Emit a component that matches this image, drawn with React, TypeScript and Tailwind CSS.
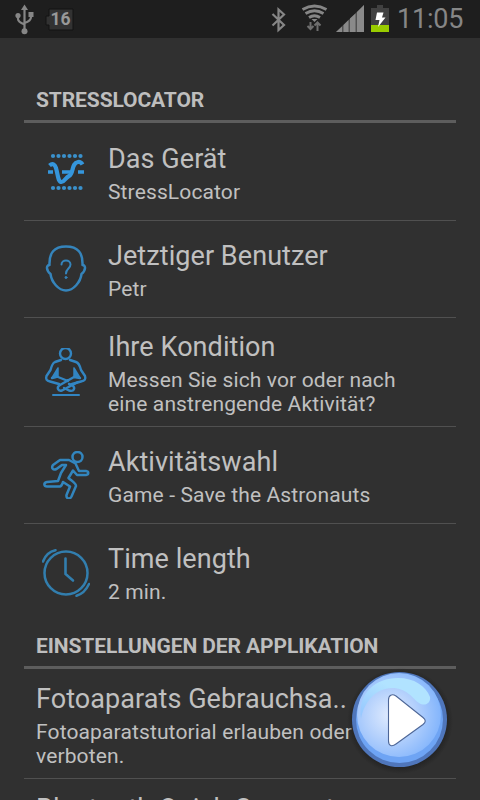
import type { ReactNode } from "react";
import clsx from "clsx";

function DeviceIcon() {
  const dots = [1.5, 7, 12.5, 18, 23.5, 29];
  return (
    <svg width="48" height="48" viewBox="0 0 48 48" fill="none" stroke="#3596dc">
      {dots.map((x) => (
        <g key={x} fill="#3a91cc" stroke="none">
          <circle cx={x + 9.5} cy="8" r="2.1" />
          <circle cx={x + 9.5} cy="40" r="2.1" />
        </g>
      ))}
      <path d="M6 24h5M20 24h9M36 24h6" strokeWidth="3.4" />
      <path d="M7.500 17.500C11 14.500 13 17 14 20C16 27 16 34 19.500 34C22.500 34 23.500 29.500 27 28C32 26 29 15 36 14C38 13.800 39.500 14.800 40.500 16.500" strokeWidth="4.2" />
    </svg>
  );
}

function UserIcon() {
  return (
    <svg width="48" height="48" viewBox="0 0 48 48" fill="none" stroke="#3584bb" strokeWidth="2.5" strokeLinejoin="round" strokeLinecap="round">
      <path d="M24 1.500C12 1.500 7 8 7.500 20C4 20 4 25.500 8.500 29C9.500 37 16.500 45.500 24 45.500C31.500 45.500 38.500 37 39.500 29C44 25.500 44 20 40.500 20C41 8 36 1.500 24 1.500Z" />
      <path d="M19.500 19.500C19.500 14 28.500 14 28.500 19.500C28.500 23.500 24 23.500 24 28.500" strokeWidth="2" />
      <circle cx="24" cy="32.500" r="1" fill="#3584bb" strokeWidth="1" />
    </svg>
  );
}

function MeditationIcon() {
  return (
    <svg width="48" height="48" viewBox="0 0 48 48" fill="none" stroke="#3285c2" strokeWidth="2.4" strokeLinejoin="round" strokeLinecap="round">
      <circle cx="23.500" cy="5.500" r="5.500" />
      <path d="M19 12L13 14C10.500 15 9.500 18 8.500 22L4.500 28C3.500 31 4.500 33 8 33.500L17 36M28 12L34 14C37 15 38 18 39 22L43 28C44 31 43 33 39 33.500L30 36" />
      <path d="M16 29L26 33M14 29L10 30M32 29L18 37C14 39.500 16 43.500 20 42.500L36 34M32 29L38 30M22 40L27 42.500C32 44 34 40 30 37L27 36" />
      <path d="M16 20L16 29L10.500 29ZM32 20L32 29L37.500 29Z" fill="#3285c2" strokeWidth="1.500" />
      <path d="M11 47h26" strokeWidth="2" />
    </svg>
  );
}

function RunnerIcon() {
  return (
    <svg width="48" height="48" viewBox="0 0 48 48" fill="none" stroke="#3285bd" strokeWidth="2.5" strokeLinejoin="round" strokeLinecap="round">
      <circle cx="35.500" cy="6" r="5" />
      <path d="M27 9L18 9L11 14C9 17 11 19.500 14.500 18L20 14L24 14L19 22L16 30L5 31C1 32 2 35.500 5 35.500L18 35.500C20 35 20.500 32.500 21 31L28 35.500L24.500 44C24 48 28 48.500 29.500 45.500L34 35C34 32 29 29.500 26.500 27L31 19.500L35 24L44 24C47 23.500 47 20.500 44 20L37 20L33.500 12.500Z" />
    </svg>
  );
}

function ClockIcon() {
  return (
    <svg width="48" height="48" viewBox="0 0 48 48" fill="none" stroke="#327eae" strokeWidth="2.500" strokeLinecap="round">
      <circle cx="24" cy="24" r="21.500" />
      <path d="M23.500 9.500V25L31 31.500" strokeWidth="2.600" />
      <path d="M1 12.500C3 7 7.500 2.500 13.500 1.200M47 35C44.500 40.500 40.500 45 34.500 46.800" />
    </svg>
  );
}

const entries: { title: string; sub: string; icon: ReactNode; tall?: boolean }[] = [
  { title: "Das Gerät", sub: "StressLocator", icon: <DeviceIcon /> },
  { title: "Jetztiger Benutzer", sub: "Petr", icon: <UserIcon /> },
  { title: "Ihre Kondition", sub: "Messen Sie sich vor oder nach eine anstrengende Aktivität?", icon: <MeditationIcon />, tall: true },
  { title: "Aktivitätswahl", sub: "Game - Save the Astronauts", icon: <RunnerIcon /> },
  { title: "Time length", sub: "2 min.", icon: <ClockIcon /> },
];

function StatusBar() {
  return (
    <header className="flex h-[38px] shrink-0 items-center bg-[#1e1e1e] text-[#868686]">
      <svg width="120" height="38" viewBox="0 0 120 38" fill="#868686">
        <path d="M24.500 8V30M18 15v4q0 3 6.500 5.500M31 14v3q0 4-6.500 6" fill="none" stroke="#868686" strokeWidth="2.200" />
        <path d="M24.500 4.500L28 10h-7Z" />
        <circle cx="18" cy="15.500" r="2.600" />
        <rect x="28.500" y="12" width="5" height="5" />
        <circle cx="24.500" cy="31.300" r="3" />
        <path d="M49 9h24v21H49v-5h-3v-9h3Z" fill="#323232" stroke="#121212" />
        <text x="50.500" y="25" className="font-[Roboto] text-[17.500px] font-bold" fill="#999">16</text>
      </svg>
      <svg className="ml-auto shrink-0" width="135" height="38" viewBox="265 0 135 38" fill="none" stroke="#868686">
        <path d="M272.500 14L284 25L278.500 30V9.500L284 14.500L272.500 25.500" strokeWidth="2.200" />
        <path d="M302.500 9.500Q314.500 2.500 326.500 9.500M305.500 13.500Q314.500 8 323.500 13.500M309 17.500Q314.500 14 320 17.500" strokeWidth="2.800" />
        <path d="M311.500 19L317.500 19L314.500 22Z" fill="#868686" stroke="none" />
        <path d="M310.500 22V29M307.500 26L310.500 29L313.500 26M317.500 31V23M314.500 25.500L317.500 22.500L320.500 25.500" stroke="#6f6f6f" strokeWidth="2" />
        <path d="M336 32L364 5V32Z" fill="#525252" stroke="none" />
        <path d="M336 32L342 26.500V32ZM343.500 32V25L348.500 20V32ZM350 32V18.500L355.500 13.500V32ZM357 32V12L364 5V32Z" fill="#8a8a8a" stroke="none" />
        <path d="M377 5h6v3h6v24h-18V8h6Z" fill="#414141" stroke="none" />
        <path d="M371 25h18v7h-18Z" fill="#9c0" stroke="none" />
        <path d="M377 12.500h6.500l-1.500 5h3.500l-7.500 9.500 1.500-7h-4Z" fill="#fff" stroke="none" />
      </svg>
      <span className="w-20 font-[Roboto] text-[27px] leading-[38px] tracking-[-0.2px]">
        <span className="-ml-[3px]">11:05</span>
      </span>
    </header>
  );
}

function SectionTitle({ children, className }: { children: ReactNode; className?: string }) {
  return (
    <h2 className={clsx("flex shrink-0 items-center border-b-[3px] border-[#5d5d5d] pt-0.5 pl-3 text-[21px] leading-6 font-bold tracking-[-0.1px] text-[#bebebe]", className)}>
      {children}
    </h2>
  );
}

function Row({ title, sub, icon, className }: { title: string; sub?: string; icon?: ReactNode; className?: string }) {
  return (
    <li className={clsx("flex shrink-0 border-[#505050] pl-3", className)}>
      {icon && <div className="mr-3 flex w-[60px] shrink-0 items-center justify-center">{icon}</div>}
      <div className="min-w-0 self-center">
        <div className="text-[27px] leading-9 tracking-[0.07px] whitespace-nowrap">{title}</div>
        {sub && <div className="mt-[3px] max-w-[325px] text-[21px] leading-6 tracking-[0.13px]">{sub}</div>}
      </div>
    </li>
  );
}

function PlayButton() {
  return (
    <button className="absolute top-[666px] left-[346px]" aria-label="Start">
      <svg width="108" height="108" viewBox="0 0 108 108">
        <defs>
          <radialGradient id="glow" cx=".4" cy=".5" r=".62">
            <stop offset="0" stopColor="#e1ecfe" />
            <stop offset=".5" stopColor="#b3d0fc" />
            <stop offset="1" stopColor="#80b3fc" />
          </radialGradient>
          <linearGradient id="shine" x1="1" y1="0" x2="0" y2="1">
            <stop offset=".4" stopColor="#b1e3ff" />
            <stop offset="1" stopColor="#94c5ff" />
          </linearGradient>
          <radialGradient id="shade">
            <stop offset=".86" stopColor="#1c1c1c" />
            <stop offset="1" stopColor="#1c1c1c" stopOpacity="0" />
          </radialGradient>
        </defs>
        <circle cx="54" cy="55" r="53" fill="url(#shade)" opacity=".65" />
        <circle cx="53.500" cy="53.500" r="47.500" fill="#4f76bb" />
        <circle cx="53.500" cy="53.500" r="43.500" fill="#6ea4f4" />
        <circle cx="53" cy="49" r="42" fill="url(#glow)" />
        <path d="M15 53C11 27 30 12 52 12C68 12 80 20 84 31C85 37 79 41 73 37C66 32 61 22 46 22C30 22 18 36 15 53Z" fill="url(#shine)" />
        <path d="M42.500 34C42.500 29 46 27.500 50 30L77 51.500C80 54 80 56 77 58.500L50 78C46 81 42.500 80 42.500 75Z" fill="#fff" stroke="#4d6697" strokeWidth="1.100" />
      </svg>
    </button>
  );
}

export default function App() {
  return (
    <div className="relative flex h-[800px] w-[480px] flex-col overflow-hidden bg-[#303030] font-[Roboto,sans-serif] text-[#c0c0c0]">
      <StatusBar />
      <main className="flex min-h-0 flex-1 flex-col overflow-hidden px-6">
        <SectionTitle className="mt-10 h-[45px]">STRESSLOCATOR</SectionTitle>
        <ul className="shrink-0 pt-px">
          {entries.map((e, i) => (
            <Row
              key={e.title}
              title={e.title}
              sub={e.sub}
              icon={e.icon}
              className={clsx(e.tall ? "h-[109px]" : "h-[97px]", i < entries.length - 1 && "border-b")}
            />
          ))}
        </ul>
        <SectionTitle className="h-[48px] pt-1">EINSTELLUNGEN DER APPLIKATION</SectionTitle>
        <ul className="shrink-0">
          <Row title="Fotoaparats Gebrauchsa.." sub="Fotoaparatstutorial erlauben oder verboten." className="h-[110px] border-b pt-0.5" />
          <Row title="Bluetooth Quick Connect" className="h-[60px]" />
        </ul>
      </main>
      <PlayButton />
    </div>
  );
}
